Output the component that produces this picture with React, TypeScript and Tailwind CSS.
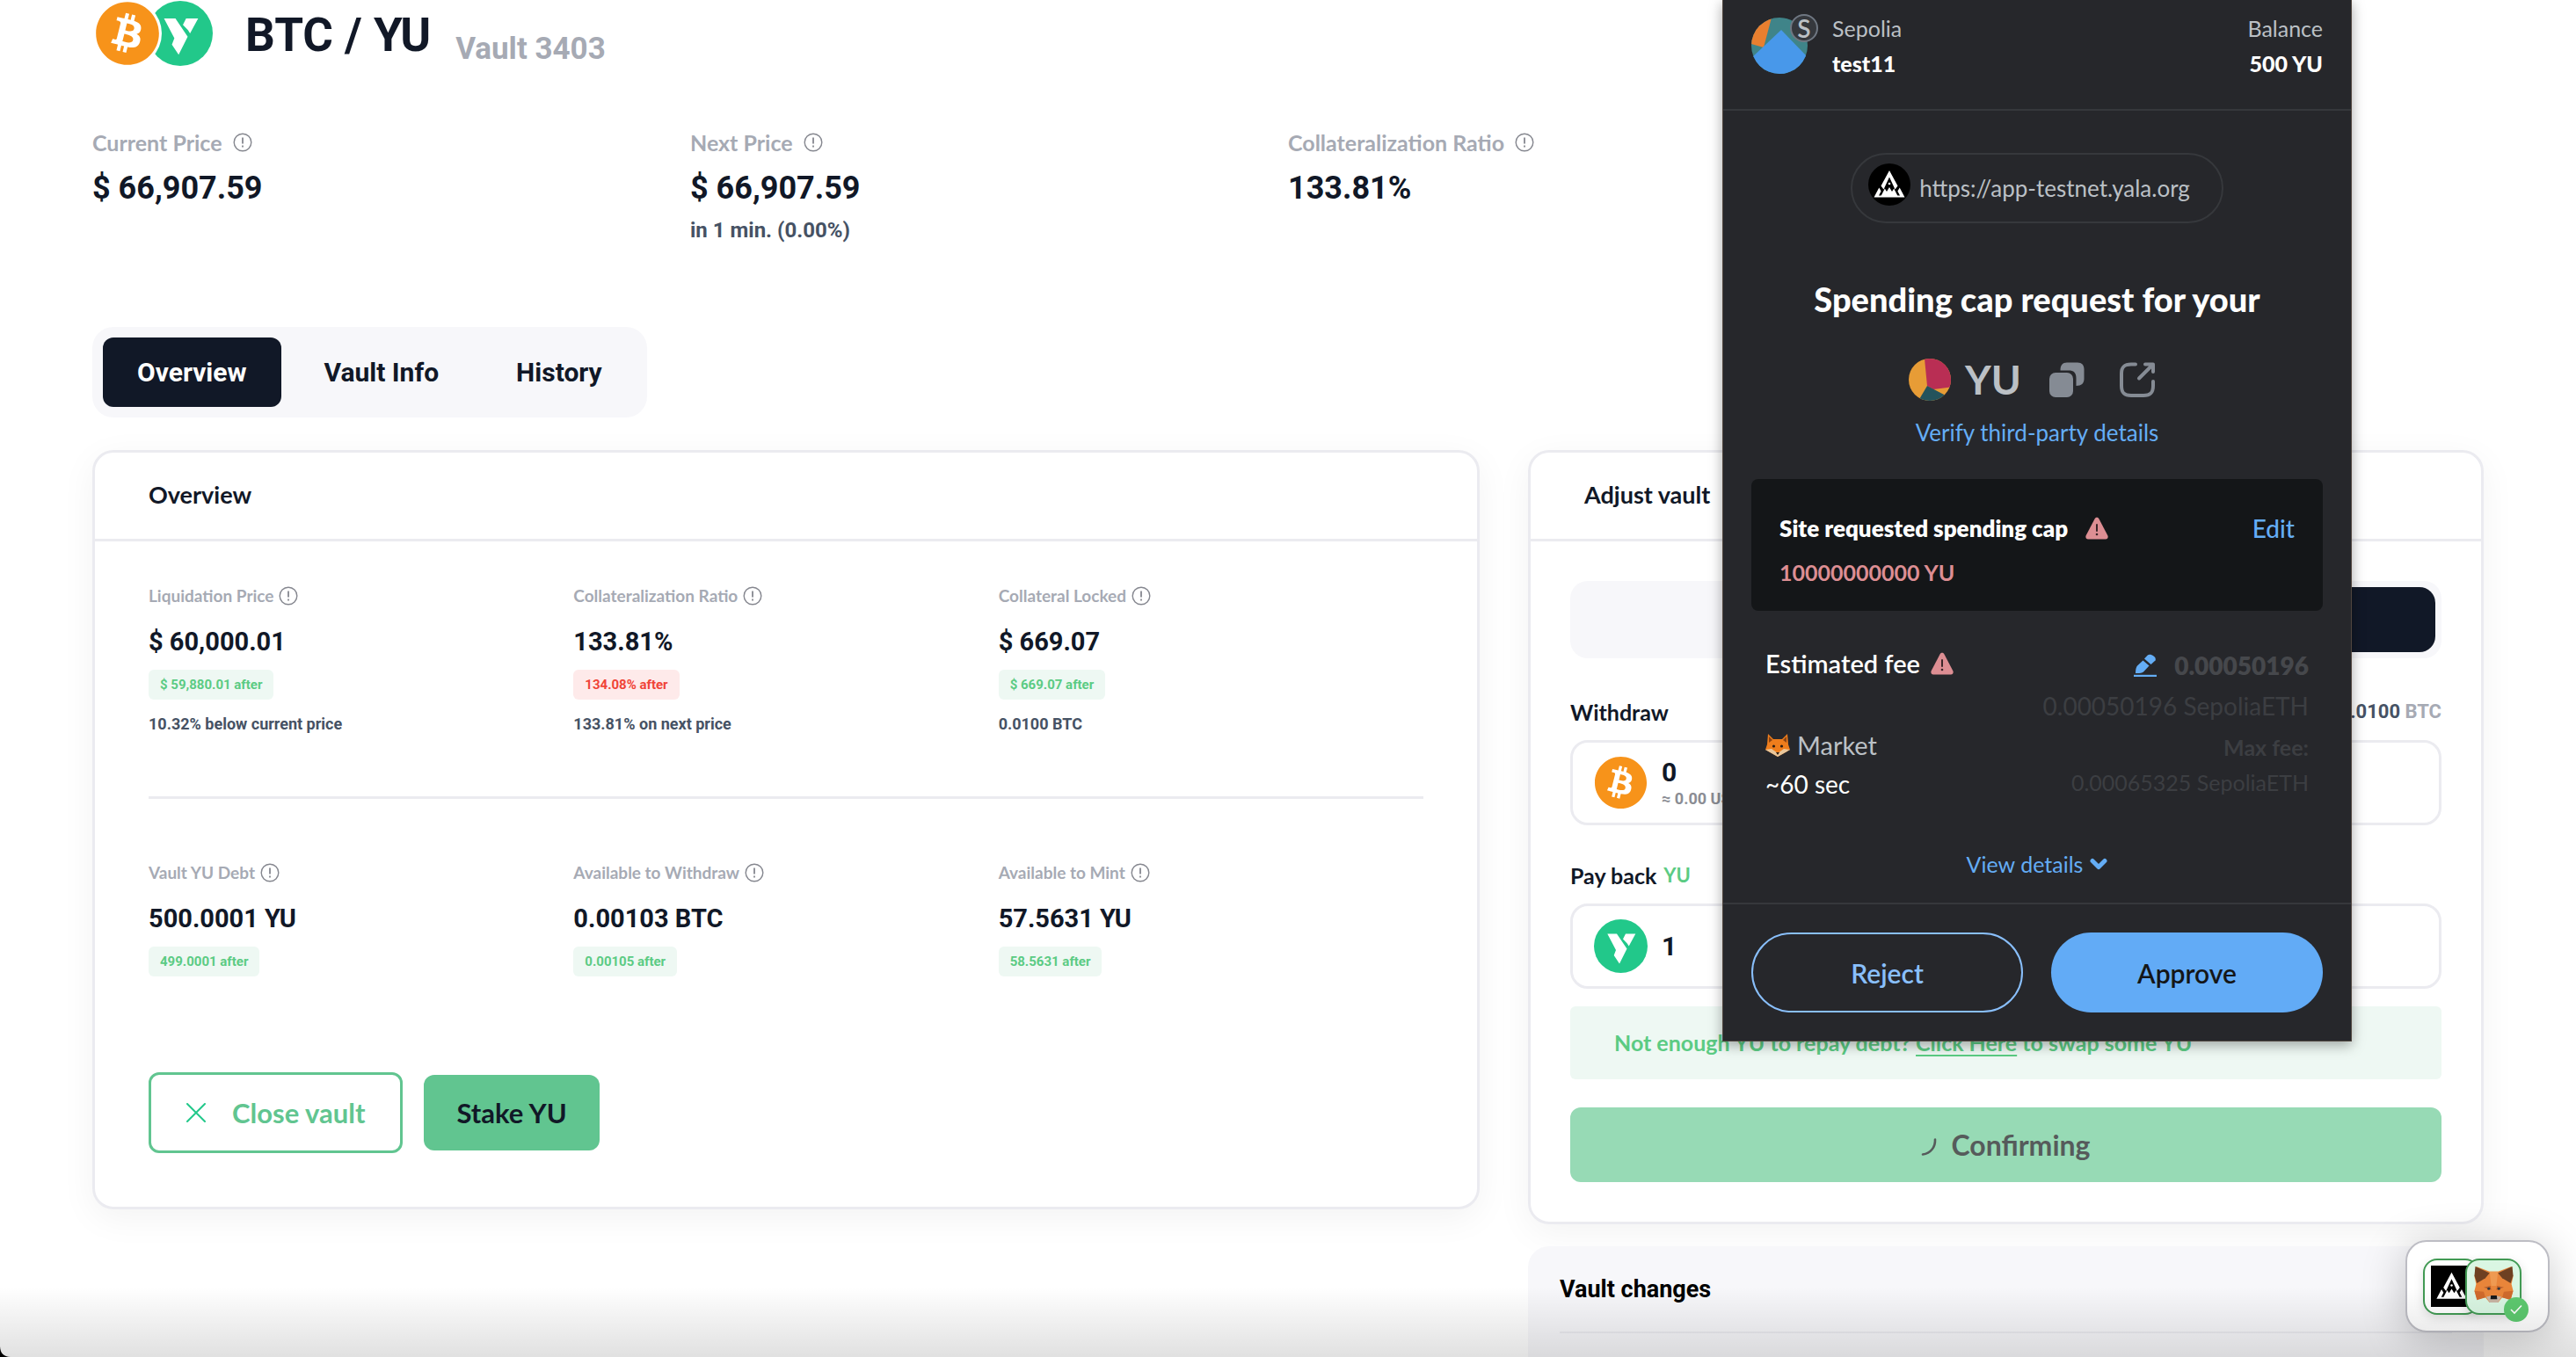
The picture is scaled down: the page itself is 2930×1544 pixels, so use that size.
import React from "react";
import { FaBitcoin } from "react-icons/fa";

const lato = "font-[Lato,sans-serif]";

function InfoIcon() {
  return (
    <svg viewBox="0 0 22 22" className="size-[22px] shrink-0 text-[#85878f]" fill="none" stroke="currentColor">
      <circle cx="11" cy="11" r="9.8" strokeWidth="1.4" />
      <path d="M11 5.5v7" strokeWidth="1.8" />
      <path d="M11 14.5v2" strokeWidth="1.8" />
    </svg>
  );
}

function BtcLogo({ className }: { className: string }) {
  return (
    <span className={`flex rounded-full bg-white ${className}`}>
      <FaBitcoin className="size-full text-[#f7931a]" />
    </span>
  );
}

function YuLogo({ className }: { className: string }) {
  return (
    <svg viewBox="0 0 61 61" className={className}>
      <circle cx="30.5" cy="30.5" r="30.5" fill="#22c88a" />
      <path d="M15.3 16.5H26L37.5 33.5 29 50.5 22.7 41 25 35Z" fill="#fff" />
      <path d="M36 16.5H47.3L39.7 30.5 37.8 27.5 33 22.5Z" fill="#fff" />
    </svg>
  );
}

function YalaMark({ className }: { className: string }) {
  return (
    <svg viewBox="0 0 48 48" className={className}>
      <rect width="48" height="48" fill="#000" />
      <g fill="#fff">
        <path d="M24 8 33.5 25.5 30.5 29.5 24 15.5 17.5 29.5 14.5 25.5Z" />
        <circle cx="24" cy="23" r="1.3" />
        <path d="M6.5 38.5 12.3 27.5 14.6 31.5 12 36.5H36L33.4 31.5 35.7 27.5 41.5 38.5Z" />
        <path d="M14.5 37 18.8 28.5 21 32 24 27 27 32 29.2 28.5 33.5 37Z" />
      </g>
    </svg>
  );
}

function FoxHead({ className }: { className: string }) {
  return (
    <svg viewBox="0 0 48 46" className={className}>
      <path d="M3 1 19 7H29L45 1 47 13 45 22 47 30 44 40 34 38 29 44H19L14 38 4 40 1 30 3 22 1 13Z" fill="#e8853a" />
      <path d="M2 1 19 9 14 15 4 21 1 12Z" fill="#6e4022" />
      <path d="M46 1 29 9 34 15 44 21 47 12Z" fill="#6e4022" />
      <path d="M19 7H29L27 24H21Z" fill="#ee9a52" />
      <path d="M1 30 12 31 14 38 4 41Z" fill="#cf6a2c" />
      <path d="M47 30 36 31 34 38 44 41Z" fill="#cf6a2c" />
      <path d="M12 26 20 24 21 29Z" fill="#b65f2c" />
      <path d="M36 26 28 24 27 29Z" fill="#b65f2c" />
      <circle cx="18" cy="27.5" r="1.6" fill="#30363d" />
      <circle cx="30" cy="27.5" r="1.6" fill="#30363d" />
      <path d="M15 37 20 36H28L33 37 29 44H19Z" fill="#c9b5a4" />
      <path d="M20.5 35.5H27.5L28 40H20Z" fill="#15181b" />
    </svg>
  );
}

function FoxEmoji() {
  return (
    <svg viewBox="0 0 28 26" className="h-[26px] w-7">
      <path d="M3 0 9 6H19L25 0 26 12 28 18 14 26 0 18 2 12Z" fill="#ee7d1c" />
      <path d="M4 3 8 7 4 10Z" fill="#8a4414" />
      <path d="M24 3 20 7 24 10Z" fill="#8a4414" />
      <path d="M0 18 7 17 14 22 21 17 28 18 14 26Z" fill="#e9c79c" />
      <circle cx="9.5" cy="14" r="1.6" fill="#2a1c12" />
      <circle cx="18.5" cy="14" r="1.6" fill="#2a1c12" />
      <path d="M12 21H16L14 24Z" fill="#2a1c12" />
    </svg>
  );
}

function Warning() {
  return (
    <svg viewBox="0 0 26 26" className="size-[26px] shrink-0">
      <path d="M13 0.8C14.2 0.8 15 1.5 15.5 2.4L25.3 21.2C26.3 23.2 25.2 25.5 23 25.5H3C0.8 25.5-0.3 23.2 0.7 21.2L10.5 2.4C11 1.5 11.8 0.8 13 0.8Z" fill="#dd8e93" />
      <path d="M13 9V16" stroke="#3a2528" strokeWidth="2" strokeLinecap="round" />
      <circle cx="13" cy="20" r="1.3" fill="#3a2528" />
    </svg>
  );
}

type Metric = { label: string; value: string; after: string; bad?: boolean; note?: string };

const metrics: Metric[] = [
  { label: "Liquidation Price", value: "$ 60,000.01", after: "$ 59,880.01 after", note: "10.32% below current price" },
  { label: "Collateralization Ratio", value: "133.81%", after: "134.08% after", bad: true, note: "133.81% on next price" },
  { label: "Collateral Locked", value: "$ 669.07", after: "$ 669.07 after", note: "0.0100 BTC" },
  { label: "Vault YU Debt", value: "500.0001 YU", after: "499.0001 after" },
  { label: "Available to Withdraw", value: "0.00103 BTC", after: "0.00105 after" },
  { label: "Available to Mint", value: "57.5631 YU", after: "58.5631 after" },
];

function MetricCell({ m }: { m: Metric }) {
  return (
    <div className={`flex flex-col items-start ${m.note ? "border-b-[3px] border-[#ebebf0] pt-12 pb-[70px]" : "pt-[70px]"}`}>
      <div className="flex h-7 items-center gap-1.5">
        <span className={`${lato} text-[19px] leading-7 font-bold text-[#a6aab4]`}>{m.label}</span>
        <InfoIcon />
      </div>
      <div className="mt-[18px] text-[29px] leading-10 font-bold">{m.value}</div>
      <div
        className={`mt-3 rounded-md px-[13px] text-[15px] leading-[34px] font-bold ${
          m.bad ? "bg-[#feeaea] text-[#f04438]" : "bg-[#eef8f3] text-[#5bcb83]"
        }`}
      >
        {m.after}
      </div>
      {m.note && <div className="mt-4 text-[18px] leading-6 font-bold text-[#465264]">{m.note}</div>}
    </div>
  );
}

function Stat({ label, value, note }: { label: string; value: string; note?: string }) {
  return (
    <div className="flex flex-col">
      <div className="flex h-7 items-center gap-3">
        <span className={`${lato} text-[25px] leading-7 font-bold text-[#a6aab4]`}>{label}</span>
        <InfoIcon />
      </div>
      <div className="mt-4 text-[36px] leading-11 font-bold">{value}</div>
      {note && <div className="mt-3 text-[24px] leading-7 font-bold text-[#465264]">{note}</div>}
    </div>
  );
}

const card = "rounded-3xl border-[3px] border-[#ebebf0] bg-white shadow-[0_10px_40px_rgba(0,0,0,0.05)]";
const cardTitle = `${lato} border-b-[3px] border-[#ebebf0] px-[61px] pb-0.5 text-[27px] leading-[96px] font-bold`;

function OverviewCard() {
  return (
    <section className={card}>
      <h2 className={cardTitle}>Overview</h2>
      <div className="px-[61px] pb-[61px]">
        <div className="grid grid-cols-3">
          {metrics.map((m) => (
            <MetricCell key={m.label} m={m} />
          ))}
        </div>
        <div className={`${lato} mt-[109px] flex items-center gap-6 text-[31px] font-bold`}>
          <button className="flex h-[92px] items-center gap-[30px] rounded-xl border-[3px] border-[#61c590] px-10 text-[#61c590]">
            <svg viewBox="0 0 22 22" className="size-[22px]" stroke="#22c88a" strokeWidth="2" strokeLinecap="round">
              <path d="M1 1 21 21M21 1 1 21" />
            </svg>
            Close vault
          </button>
          <button className="h-[86px] rounded-xl bg-[#61c590] px-[37px] text-[#111827]">Stake YU</button>
        </div>
      </div>
    </section>
  );
}

function AdjustCard() {
  const box = "flex h-[97px] items-center gap-4 rounded-[20px] border-[3px] border-[#ebebf0] pl-6";
  return (
    <section className={card}>
      <h2 className={cardTitle}>Adjust vault</h2>
      <div className="p-[45px]">
        <div className="flex h-[88px] rounded-[20px] bg-[#f7f7fa] p-[7px]">
          <button aria-label="Deposit" className="flex-1 rounded-[18px]" />
          <button aria-label="Withdraw" className="flex-1 rounded-[18px] bg-[#111827]" />
        </div>
        <div className="mt-[45px] flex items-center justify-between leading-8 font-bold">
          <label htmlFor="withdraw" className={`${lato} text-[25px]`}>Withdraw</label>
          <span className="text-[22px] text-[#465264]">
            0.0100 <span className="text-[#a6aab4]">BTC</span>
          </span>
        </div>
        <div className={`mt-4 ${box}`}>
          <BtcLogo className="size-[61px]" />
          <div className="flex flex-1 flex-col">
            <input id="withdraw" defaultValue="0" className="h-9 w-full text-[30px] leading-9 font-bold outline-none" />
            <span className="text-[18px] leading-6 font-bold text-[#8b8d94]">≈ 0.00 USD</span>
          </div>
        </div>
        <div className={`${lato} mt-[41px] flex items-center gap-2 text-[25px] leading-8 font-bold`}>
          <label htmlFor="payback">Pay back</label>
          <span className="text-[22px] text-[#5bcb83]">YU</span>
        </div>
        <div className={`mt-4 ${box}`}>
          <YuLogo className="size-[61px]" />
          <input id="payback" defaultValue="1" className="h-9 min-w-0 flex-1 text-[30px] leading-9 font-bold outline-none" />
        </div>
        <p className={`${lato} mt-5 rounded-md bg-[#eef8f3] px-[50px] text-[25px] leading-[83px] font-bold text-[#5bcb83]`}>
          Not enough YU to repay debt?{" "}
          <a href="#swap" className="underline decoration-2 underline-offset-4">Click Here</a> to swap some YU
        </p>
        <button className={`${lato} mt-8 flex h-[85px] w-full items-center justify-center gap-4 rounded-xl bg-[#97dab5] text-[32px] font-bold text-[#565b5b]`}>
          <svg viewBox="0 0 18 20" className="mt-1 h-5 w-[18px]" fill="none" stroke="currentColor" strokeWidth="2.6" strokeLinecap="round">
            <path d="M16 1.5C16.5 10 11 17.5 2 18.5" />
          </svg>
          Confirming
        </button>
      </div>
    </section>
  );
}

function WalletPopup() {
  return (
    <div className={`${lato} absolute top-0 right-[255px] w-[716px] border-x border-b border-[#51463f] bg-[#26272b] text-[25px] leading-10 text-[#bbc0c5] shadow-[0_4px_14px_rgba(0,0,0,0.35)]`}>
      <div className="flex border-b-2 border-[#36383c] px-8 pt-3 pb-8">
        <div className="relative mt-2 size-16">
          <svg viewBox="0 0 64 64" className="size-16 rounded-full">
            <rect width="64" height="64" fill="#3f8489" />
            <path d="M23 0 14 34 0 30V0Z" fill="#e97f2f" />
            <path d="M34 14 64 45V64H0V46Z" fill="#4898ea" />
          </svg>
          <span className="absolute -top-1 -right-3 flex size-8 items-center justify-center rounded-full border-2 border-[#6f7782] bg-[#35383d] text-[28px] leading-7 font-semibold">S</span>
        </div>
        <div className="ml-7 flex-1">
          <div>Sepolia</div>
          <div className="font-black text-white">test11</div>
        </div>
        <div className="text-right">
          <div>Balance</div>
          <div className="font-black text-white">500 YU</div>
        </div>
      </div>

      <div className="flex flex-col items-center">
        <div className="mt-12 flex h-20 items-start gap-2.5 rounded-full border-2 border-[#36383c] pt-2.5 pr-9 pl-[18px] text-[26px] leading-14">
          <YalaMark className="size-12 rounded-full" />
          <span>https://app-testnet.yala.org</span>
        </div>
        <h2 className="mt-[62px] text-[38px] leading-12 font-black text-white">Spending cap request for your</h2>
        <div className="mt-11 flex h-12 items-center pr-3">
          <svg viewBox="0 0 48 48" className="size-12 rounded-full">
            <rect width="48" height="48" fill="#e79c36" />
            <path d="M18 0 21 31 28 35 48 32.5V0Z" fill="#b92e54" />
            <path d="M21 31 42 42V48H11Z" fill="#24535c" />
          </svg>
          <span className="ml-4 text-[46px] leading-12 font-bold">YU</span>
          <button aria-label="Copy address" className="ml-8">
            <svg viewBox="0 0 40 40" className="size-10" fill="#858b94">
              <rect x="0" y="12" width="27" height="28" rx="7" />
              <path d="M12.5 9.5C12.5 3.5 15 0.5 20 0.5H32C37 0.5 39.5 3.5 39.5 8V19C39.5 24 36.5 27 30.5 27V18C30.5 12 27.5 9.5 22 9.5Z" />
            </svg>
          </button>
          <button aria-label="Open in explorer" className="ml-10">
            <svg viewBox="0 0 40 40" className="size-10" fill="none" stroke="#858b94" strokeWidth="4" strokeLinecap="round" strokeLinejoin="round">
              <path d="M18 2.5H13C5 2.5 2 5.5 2 13V27C2 35 5 38 13 38H27C35 38 38 35 38 27V22" />
              <path d="M22 18.5 37 3.5M29 2.5H38V11" />
            </svg>
          </button>
        </div>
        <button className="mt-4 text-[26px] text-[#64adf5]">Verify third-party details</button>
      </div>

      <div className="mx-8 mt-[33px] rounded-lg bg-[#141618] px-8 pt-9 pb-6">
        <div className="flex items-center">
          <span className="text-[26px] font-extrabold text-white">Site requested spending cap</span>
          <span className="ml-5">
            <Warning />
          </span>
          <button className="ml-auto text-[28px] font-medium text-[#64adf5]">Edit</button>
        </div>
        <div className="mt-2.5 font-bold text-[#dd8e93]">10000000000 YU</div>
      </div>

      <div className="mt-10 flex justify-between px-12 text-[28px]">
        <div>
          <div className="flex items-center gap-3 text-[29px] font-semibold text-white">
            Estimated fee <Warning />
          </div>
          <div className="mt-[53px] flex items-center gap-2 text-[29px]">
            <FoxEmoji />
            Market
          </div>
          <div className="mt-1 text-white">~60 sec</div>
        </div>
        <div className="pt-0.5 text-right text-[#3c3e42]">
          <div className="flex items-center justify-end gap-5 font-extrabold text-[#46484c]">
            <button aria-label="Edit fee">
              <svg viewBox="0 0 26 26" className="size-[26px]" fill="#64adf5">
                <path d="M10.5 7.5 17.5 13.5 11 20.5C9 22 5.500 22.2 2 22 2 18.500 2.500 15.500 4 13.5Z" />
                <path d="M12 5.500 15.500 1.800C18.500-1.200 26.500 3.500 24.500 7.500L19.500 12Z" />
                <rect y="23.8" width="26" height="2.2" />
              </svg>
            </button>
            0.00050196
          </div>
          <div className="mt-1.5">0.00050196 SepoliaETH</div>
          <div className="mt-[7px] text-[25px] font-bold">Max fee:</div>
          <div className="text-[25px]">0.00065325 SepoliaETH</div>
        </div>
      </div>

      <button className="mx-auto mt-[51px] flex items-center gap-2 text-[#64adf5]">
        View details
        <svg viewBox="0 0 20 14" className="h-3.5 w-5" fill="none" stroke="currentColor" strokeWidth="5" strokeLinecap="round" strokeLinejoin="round">
          <path d="M3 3.5 10 10.5 17 3.5" />
        </svg>
      </button>

      <div className="mt-6 grid grid-cols-2 gap-8 border-t-2 border-[#36383c] px-8 py-8 text-[30px] font-semibold">
        <button className="h-[91px] rounded-full border-2 border-[#89bffb] text-[#89bffb]">Reject</button>
        <button className="h-[91px] rounded-full bg-[#62abf6] text-[#141618]">Approve</button>
      </div>
    </div>
  );
}

function WalletBadge() {
  return (
    <div className="absolute right-[30px] bottom-7 flex h-[105px] w-[164px] items-center rounded-3xl border-2 border-[#bdbdc4] bg-white pl-[18px] shadow-[0_8px_50px_rgba(0,0,0,0.22)]">
      <div className="flex size-16 items-center rounded-2xl border-2 border-[#429a54] bg-white pl-[7px] shadow-[0_4px_12px_rgba(0,0,0,0.12)]">
        <YalaMark className="size-[47px]" />
      </div>
      <div className="relative -ml-4 flex size-16 items-center justify-center rounded-2xl border-2 border-[#429a54] bg-[#daf6e3] shadow-[0_4px_12px_rgba(0,0,0,0.15)]">
        <FoxHead className="mb-1 h-11 w-[47px]" />
        <span className="absolute -right-2.5 -bottom-2.5 flex size-7 items-center justify-center rounded-full bg-[#5dc96f]">
          <svg viewBox="0 0 14 12" className="h-3 w-3.5" fill="none" stroke="#fff" strokeWidth="1.6">
            <path d="M1 6 5 10 13 1.5" />
          </svg>
        </span>
      </div>
    </div>
  );
}

export default function App() {
  return (
    <div className="relative h-screen overflow-hidden bg-white font-[Roboto,sans-serif] text-[#111827]">
      <main className="px-[105px]">
        <header className="flex h-[76px] items-center">
          <div className="flex items-center pl-[3px]">
            <BtcLogo className="z-10 size-[74px] ring-2 ring-white" />
            <YuLogo className="-ml-3.5 size-[74px]" />
          </div>
          <h1 className="ml-[37px] pt-1 text-[53px] leading-[72px] font-bold">BTC / YU</h1>
          <span className="ml-7 self-end text-[35px] leading-10 font-bold text-[#a6aab4]">Vault 3403</span>
        </header>

        <div className="grid grid-cols-4 pt-[72px]">
          <Stat label="Current Price" value="$ 66,907.59" />
          <Stat label="Next Price" value="$ 66,907.59" note="in 1 min. (0.00%)" />
          <Stat label="Collateralization Ratio" value="133.81%" />
        </div>

        <nav className="mt-24 inline-flex gap-2.5 rounded-3xl bg-[#f7f7fa] p-3 text-[30px] font-bold">
          <button className="h-[79px] rounded-xl bg-[#111827] px-[39px] text-white">Overview</button>
          <button className="h-[79px] rounded-xl px-[39px]">Vault Info</button>
          <button className="h-[79px] rounded-xl px-[39px]">History</button>
        </nav>

        <div className="mt-[37px] grid grid-cols-[1578fr_1087fr] items-start gap-[55px]">
          <OverviewCard />
          <div>
            <AdjustCard />
            <section className="mt-[25px] h-64 rounded-3xl bg-[#f7f7fa] px-9 pt-[33px]">
              <h2 className="border-b-2 border-[#ebebf0] pb-8 text-[27px] leading-8 font-bold text-black">Vault changes</h2>
            </section>
          </div>
        </div>
      </main>

      <WalletPopup />
      <WalletBadge />
      <div className="pointer-events-none absolute inset-x-0 bottom-0 h-20 bg-linear-to-t from-black/12 to-transparent" />
      <svg viewBox="0 0 12 12" className="pointer-events-none absolute bottom-0 left-0 size-3">
        <path d="M0 0C0.5 8 4 11.5 12 12H0Z" fill="#000" />
      </svg>
    </div>
  );
}
